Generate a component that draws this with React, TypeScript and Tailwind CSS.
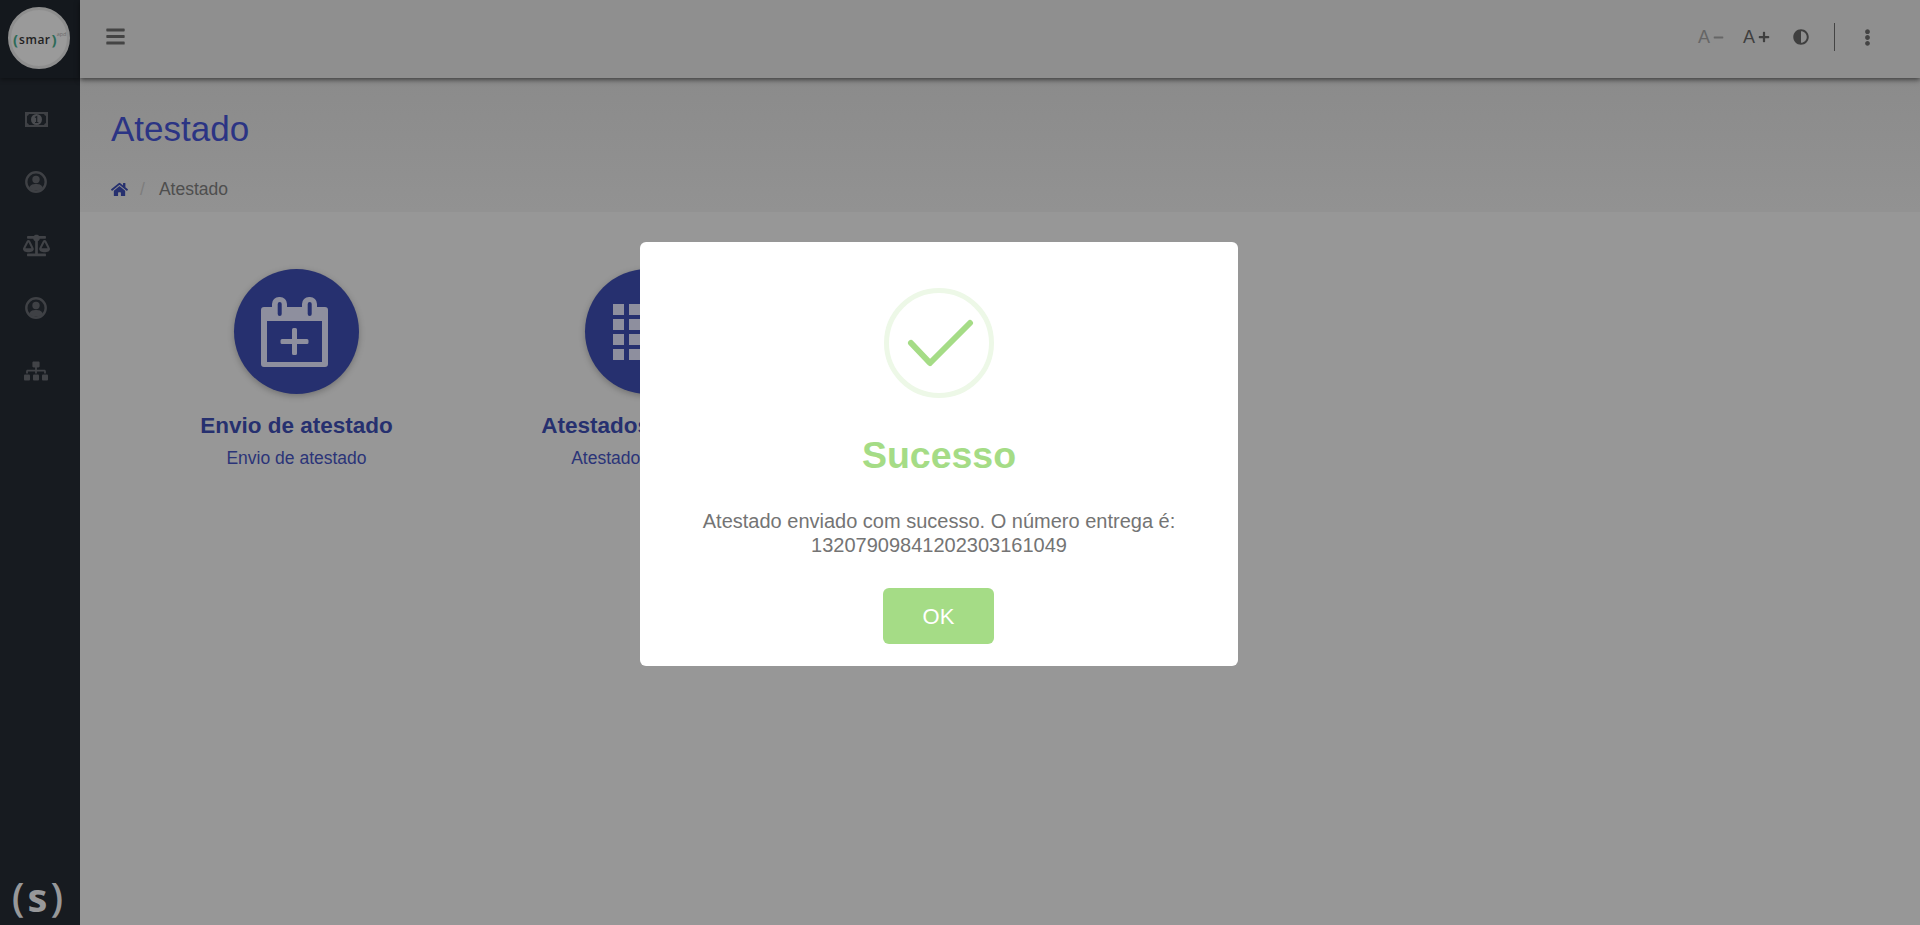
import { FaAdjust, FaBalanceScale, FaBars, FaEllipsisV, FaHome, FaMinus, FaPlus, FaSitemap } from "react-icons/fa";

function MoneyIcon() {
  return (
    <svg width="23" height="15" viewBox="0 0 23 15">
      <rect width="23" height="15" fill="#3f4145" />
      <path fill="#191d22" d="M4 2h15a3 3 0 0 0 2 2v7a3 3 0 0 0-2 2H4a3 3 0 0 0-2-2V4a3 3 0 0 0 2-2z" />
      <circle cx="11.5" cy="7.5" r="5.5" fill="#4a4c50" />
      <path d="M10 5.5 L11.7 4.5 V10.5 M10 10.5 H13.4" stroke="#1c2025" strokeWidth="1.2" fill="none" />
    </svg>
  );
}

function UserIcon() {
  return (
    <svg width="22" height="22" viewBox="0 0 22 22">
      <circle cx="11" cy="11" r="9.7" fill="#1a1e23" stroke="#3f4145" strokeWidth="2.4" />
      <circle cx="11" cy="8.5" r="3.7" fill="#3f4145" />
      <path d="M4.2 17 C5 13.6 8 13 11 13 C14 13 17 13.6 17.8 17 C15.8 19 13.5 19.6 11 19.6 C8.5 19.6 6.2 19 4.2 17z" fill="#3f4145" />
    </svg>
  );
}

function CalendarPlus() {
  return (
    <svg width="67" height="70" viewBox="0 0 67 70" fill="none">
      <path fillRule="evenodd" fill="#8e8f9e" d="M3 10h8V7a7 7 0 0 1 7-7h1a7 7 0 0 1 7 7v3h15V7a7 7 0 0 1 7-7h1a7 7 0 0 1 7 7v3h8a3 3 0 0 1 3 3v54a3 3 0 0 1-3 3H3a3 3 0 0 1-3-3V13a3 3 0 0 1 3-3zM6 24v41h55V24zM18.7 5a2 2 0 0 0-2 2v10a2 2 0 0 0 4 0V7a2 2 0 0 0-2-2zM48.7 5a2 2 0 0 0-2 2v10a2 2 0 0 0 4 0V7a2 2 0 0 0-2-2z" />
      <path fill="#8e8f9e" d="M31.5 33a1.5 1.5 0 0 1 1.5-1.5h2a1.5 1.5 0 0 1 1.5 1.5v9.5h10a1.5 1.5 0 0 1 1.5 1.5v2a1.5 1.5 0 0 1-1.5 1.5h-10V57a1.5 1.5 0 0 1-1.5 1.5h-2a1.5 1.5 0 0 1-1.5-1.5v-9.5h-10a1.5 1.5 0 0 1-1.5-1.5v-2a1.5 1.5 0 0 1 1.5-1.5h10z" transform="translate(-0.5 -0.5)" />
    </svg>
  );
}

function TableIcon() {
  const rows = [0, 15, 30, 45];
  return (
    <svg width="70" height="56" viewBox="0 0 70 56" fill="#8e8f9e">
      {rows.map((y) => (
        <g key={y}>
          <rect x="0" y={y} width="11" height="11" />
          <rect x="16" y={y} width="38" height="11" />
          <rect x="59" y={y} width="11" height="11" />
        </g>
      ))}
    </svg>
  );
}

function Tile({ title, sub, icon }: { title: string; sub: string; icon: React.ReactNode }) {
  return (
    <div className="w-[351px] flex flex-col items-center shrink-0">
      <div className="w-[125px] h-[125px] rounded-full bg-[#26306f] flex items-center justify-center shadow-[0_2px_6px_rgba(0,0,0,0.25)]">
        {icon}
      </div>
      <div className="mt-[19px] text-[22.5px] leading-[26px] font-bold text-[#26306f]">{title}</div>
      <div className="mt-[8px] text-[17.5px] leading-[22px] text-[#2b3478]">{sub}</div>
    </div>
  );
}

export default function App() {
  return (
    <div className="relative flex h-screen overflow-hidden bg-[#979797] font-['Liberation_Sans',Arial,sans-serif]">
      <aside className="w-[80px] shrink-0 flex flex-col bg-[#171b20]">
        <div className="h-[78px] flex items-start pl-[8px] pt-[7px] shrink-0 bg-[#14181d] shadow-[0_2px_4px_rgba(0,0,0,0.35)]">
          <div className="w-[62px] h-[62px] rounded-full bg-[#9a9a9a] border-[3px] border-[#8e8e8e] flex items-center pl-[2px]">
            <span className="font-bold leading-none text-[#222] font-['Open_Sans',sans-serif] flex items-start mt-[3px]">
              <span className="text-[#2d6b58] text-[15px] leading-[15px]">(</span>
              <span className="text-[12px] font-semibold leading-[15px] tracking-[0.5px] mx-[1px]">smar</span>
              <span className="text-[#2d6b58] text-[15px] leading-[15px]">)</span>
              <span className="text-[5.5px] font-normal text-[#6a6a6a] leading-none">apd</span>
            </span>
          </div>
        </div>
        <nav className="flex flex-col items-center text-[#414347] ml-[-8px] mt-[29px]">
          <div className="h-[24px] flex items-center"><MoneyIcon /></div>
          <div className="h-[24px] mt-[39px] flex items-center"><UserIcon /></div>
          <div className="h-[24px] mt-[39px] flex items-center"><FaBalanceScale size={27} /></div>
          <div className="h-[24px] mt-[39px] flex items-center"><UserIcon /></div>
          <div className="h-[24px] mt-[39px] flex items-center"><FaSitemap size={24} /></div>
        </nav>
        <div className="mt-auto mb-[7px] flex justify-center text-[40px] leading-[42px] text-[#97989a] font-['Open_Sans',sans-serif] ml-[-5px]">
          <span className="font-semibold">(</span>
          <span className="font-bold mx-[3px]">s</span>
          <span className="font-semibold">)</span>
        </div>
      </aside>

      <div className="flex-1 min-w-0 flex flex-col">
        <header className="h-[78px] shrink-0 flex items-start pt-[26px] pl-[25px] pr-[44px] bg-[#8f8f8f] shadow-[0_2px_5px_rgba(0,0,0,0.55)] relative z-10">
          <FaBars size={21} className="text-[#444]" />
          <div className="ml-auto flex items-center h-[22px]">
            <div className="flex items-center gap-[3px] text-[#666] text-[18px] leading-none">
              <span>A</span>
              <FaMinus size={11} />
            </div>
            <div className="flex items-center gap-[3px] text-[#3f3f3f] text-[18px] leading-none ml-[19px]">
              <span>A</span>
              <FaPlus size={12} />
            </div>
            <FaAdjust size={16} className="text-[#3f3f3f] ml-[23px]" />
            <div className="w-px h-[28px] bg-[#444] ml-[25px]" />
            <FaEllipsisV size={17} className="text-[#444] ml-[24px]" />
          </div>
        </header>

        <section className="h-[134px] shrink-0 pl-[31px] bg-gradient-to-b from-[#8b8b8b] to-[#929292] border-b border-[#929292]">
          <h1 className="mt-[30px] text-[35px] leading-[42px] font-normal text-[#2b3484]">Atestado</h1>
          <div className="mt-[28px] flex items-center text-[17.5px] leading-[22px]">
            <FaHome size={17} className="text-[#26306f]" />
            <span className="ml-[12px] text-[#7d7d7d]">/</span>
            <span className="ml-[14px] text-[#4e4e4e]">Atestado</span>
          </div>
        </section>

        <main className="flex pl-[41px] pt-[57px]">
          <Tile title="Envio de atestado" sub="Envio de atestado" icon={<div className="mr-[5px]"><CalendarPlus /></div>} />
          <Tile title="Atestados enviados" sub="Atestados enviados" icon={<TableIcon />} />
        </main>
      </div>

      <div className="absolute inset-0 z-20 flex items-start justify-center pt-[242px] pr-[42px]">
        <div className="w-[598px] h-[424px] rounded-[6px] bg-white flex flex-col items-center">
          <div className="mt-[46px] w-[110px] h-[110px] rounded-full border-[5px] border-[#edf8e7] flex items-center justify-center">
            <svg width="70" height="50" viewBox="0 0 70 50" fill="none" className="mt-[2px] mr-[-4px]">
              <path d="M5 24 L24 44 L64 4" stroke="#a5dc86" strokeWidth="6" strokeLinecap="round" strokeLinejoin="round" />
            </svg>
          </div>
          <h2 className="mt-[33px] text-[37.5px] leading-[48px] font-bold text-[#a5dc86]">Sucesso</h2>
          <p className="mt-[30px] text-[20px] leading-[24px] text-[#747474] text-center">
            Atestado enviado com sucesso. O número entrega é:<br />13207909841202303161049
          </p>
          <button className="mt-[31px] mr-[1px] w-[111px] h-[56px] rounded-[6px] bg-[#a5dc86] text-white text-[22px]">OK</button>
        </div>
      </div>
    </div>
  );
}
